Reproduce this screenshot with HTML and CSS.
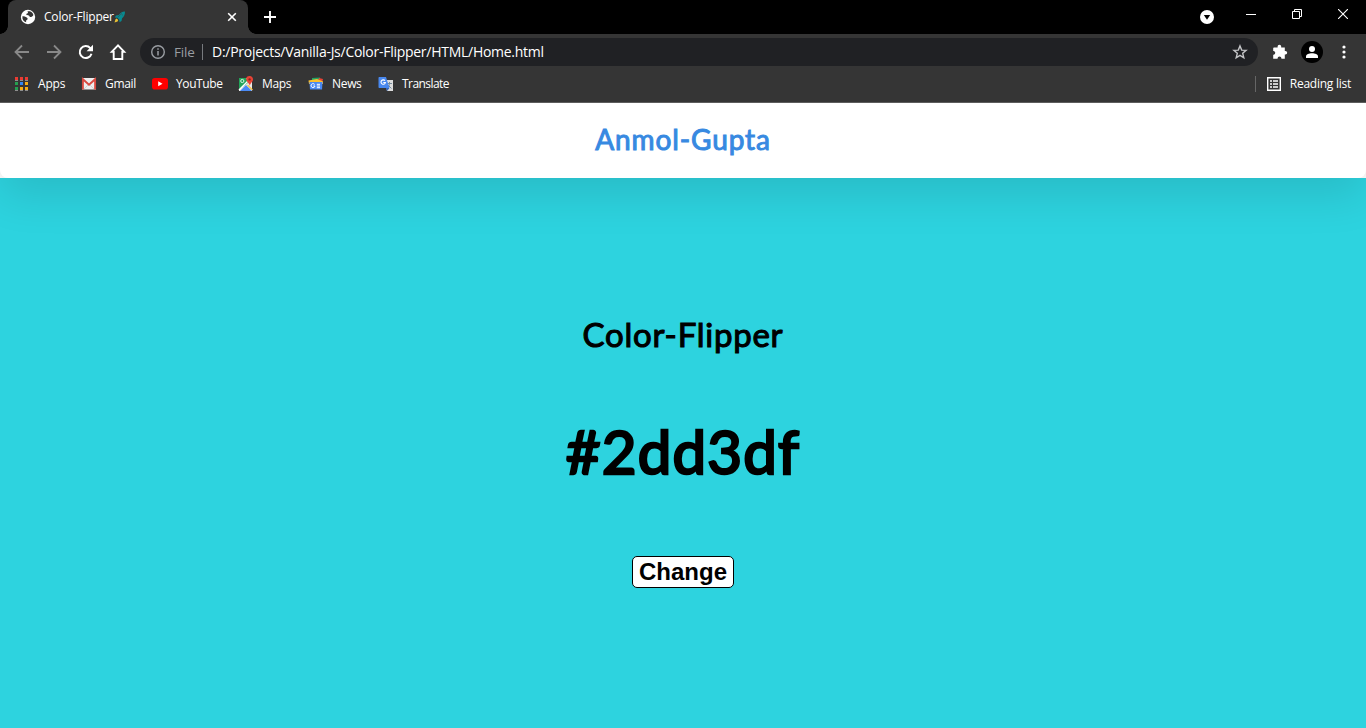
FILE: index.html
```html
<!DOCTYPE html>
<html lang="en">
<head>
<meta charset="utf-8">
<title>Color-Flipper</title>
<link rel="stylesheet" href="styles.css">
</head>
<body>
<div class="browser">
  <div class="tabstrip">
    <div class="tab">
      <svg class="globe" width="16" height="16" viewBox="0 0 16 16"><circle cx="8" cy="8" r="7.2" fill="#fff"/><path d="M2.400 7.200C4 7 5 7.400 6.300 8.200c1.100.7 1.700 1.200 1.200 2.100-.4.700-1.300.7-1.400 1.700v1.300C3.700 12.600 2 10.300 2.400 7.200zM7.500 2.300h2.300c1.700.6 3 1.800 3.600 3.600-.9 1.600-2 2.200-3.100 2.100-1-.1-.6-1.300-1.600-1.600-1-.3-2.400.1-2.400-1.100 0-.9 1.600-.6 1.700-1.600z" fill="#353535"/></svg>
      <span class="tab-title">Color-Flipper</span>
      <svg class="rocket" width="12" height="12" viewBox="0 0 12 12"><path d="M11 .5C8 .7 6.200 2 4.800 4L2 4.500.8 6.500l2.500.2 2 2 .2 2.600 2-1.300.6-2.700C10 5.700 11 3.700 11 .5z" fill="#078b91"/><path d="M7.500 3l1.600 1.500M3.800 6.200l4-3.900" stroke="#35565a" stroke-width=".8"/><path d="M.5 11.500l1-3.300 1.200-.6 1.500 1.500-.6 1.400z" fill="#e7bf35"/></svg>
      <svg class="tab-close" width="10" height="10" viewBox="0 0 10 10"><path d="M1.200 1.200l7.600 7.600M8.800 1.200L1.200 8.800" stroke="#fff" stroke-width="1.600"/></svg>
    </div>
    <svg class="newtab" width="12" height="12" viewBox="0 0 12 12"><path d="M6 0v12M0 6h12" stroke="#fff" stroke-width="1.900"/></svg>
    <div class="window-controls">
      <svg width="14" height="14" viewBox="0 0 14 14"><circle cx="7" cy="7" r="7" fill="#fff"/><path d="M3.800 5h6.400L7 9.800z" fill="#000"/></svg>
      <svg class="minimize" width="10" height="10" viewBox="0 0 10 10"><path d="M0 5.500h10" stroke="#fff"/></svg>
      <svg class="restore" width="10" height="10" viewBox="0 0 10 10"><path d="M.5 2.500h7v7h-7zM2.500 2.500v-2h7v7h-2" fill="none" stroke="#fff"/></svg>
      <svg class="win-close" width="10" height="10" viewBox="0 0 10 10"><path d="M0 0l10 10M10 0L0 10" stroke="#fff" stroke-width="1.100"/></svg>
    </div>
  </div>
  <div class="toolbar">
    <svg width="16" height="16" viewBox="0 0 16 16"><path d="M15 8H2M8 1.500L1.500 8 8 14.500" fill="none" stroke="#898989" stroke-width="1.800"/></svg>
    <svg width="16" height="16" viewBox="0 0 16 16"><path d="M1 8h13M8 1.500L14.500 8 8 14.500" fill="none" stroke="#898989" stroke-width="1.800"/></svg>
    <svg width="16" height="16" viewBox="0 0 16 16"><path d="M13.500 9.700A6 6 0 1 1 12.300 4.100L13 5" fill="none" stroke="#fff" stroke-width="2"/><path d="M15 .8v6.400H8.600z" fill="#fff"/></svg>
    <svg width="18" height="18" viewBox="0 0 18 18"><path d="M9 2.400L2.800 8.900H4.700V16h8.600V8.900h1.900z" fill="none" stroke="#fff" stroke-width="1.900"/></svg>
    <div class="omnibox">
      <svg width="16" height="16" viewBox="0 0 16 16"><circle cx="8" cy="8" r="6.300" fill="none" stroke="#999da2" stroke-width="1.400"/><path d="M8 7v4.500M8 4.300v1.500" stroke="#999da2" stroke-width="1.500"/></svg>
      <span class="scheme">File</span>
      <span class="url">D:/Projects/Vanilla-Js/Color-Flipper/HTML/Home.html</span>
      <svg class="star" width="16" height="16" viewBox="0 0 16 16"><path d="M8 1.900l1.700 4.200 4.400.3-3.400 2.900 1.100 4.500L8 11.400l-3.800 2.400 1.100-4.500-3.400-2.900 4.400-.3z" fill="none" stroke="#c4c5c7" stroke-width="1.400"/></svg>
    </div>
    <svg class="puzzle" width="16" height="16" viewBox="0 0 16 16"><path d="M2 3.400h3.600V2.600a1.800 1.800 0 0 1 3.600 0v.8h3.600V7h.6a1.800 1.800 0 0 1 0 3.600h-.6v4.200H9.400v-.5a1.900 1.900 0 0 0-3.800 0v.5H1.200v-4.100h.6a1.900 1.900 0 0 0 0-3.700h-.6V4.200c0-.5.3-.8.8-.8z" fill="#fff"/></svg>
    <svg class="avatar" width="22" height="22" viewBox="0 0 22 22"><circle cx="11" cy="11" r="11" fill="#000"/><circle cx="11" cy="8" r="3" fill="#fff"/><path d="M5 17v-1.500C5 13.400 8 12.300 11 12.300s6 1.100 6 3.200V17z" fill="#fff"/></svg>
    <svg class="kebab" width="4" height="16" viewBox="0 0 4 16"><circle cx="2" cy="3" r="1.600" fill="#fff"/><circle cx="2" cy="8" r="1.600" fill="#fff"/><circle cx="2" cy="13" r="1.600" fill="#fff"/></svg>
  </div>
  <div class="bookmarks">
    <a class="bookmark apps"><svg width="14" height="14" viewBox="0 0 14 14"><path d="M0 0h3v3H0zM5 0h3v3H5zM10 0h3v3h-3z" fill="#ea3c33"/><path d="M0 5h3v3H0zM0 10h3v3H0z" fill="#259f50"/><path d="M5 5h3v3H5z" fill="#2f87f4"/><path d="M10 5h3v3h-3zM5 10h3v3H5zM10 10h3v3h-3z" fill="#f5ad13"/><path d="M0 3.500h3M5 3.500h3M10 3.500h3M0 13.500h3M5 13.500h3M10 13.500h3" stroke="#8e8e8e"/></svg><span>Apps</span></a>
    <a class="bookmark gmail"><svg width="16" height="14" viewBox="0 0 16 14"><path d="M1 1h14v11.500H1z" fill="#eee"/><path d="M3 12l5-5 5 5" fill="none" stroke="#d2d2d2"/><path d="M1.900 12.500V2.200L8 7.700l6.100-5.500v10.300" fill="none" stroke="#d94a40" stroke-width="1.900"/></svg><span>Gmail</span></a>
    <a class="bookmark youtube"><svg width="16" height="12" viewBox="0 0 16 12"><rect width="16" height="11.500" rx="2.800" fill="#f00"/><path d="M6.200 3.300v5L10.500 5.800z" fill="#fff"/></svg><span>YouTube</span></a>
    <a class="bookmark maps"><svg width="16" height="16" viewBox="0 0 16 16"><path d="M1 2h13v13H1z" fill="#e9e9e9"/><path d="M1 2h7l3 4-10 8z" fill="#23a45a"/><path d="M2 15l6-6 6 6z" fill="#4a8af4"/><path d="M1 14L11 4" stroke="#fff" stroke-width="1.500"/><path d="M9.500 9l5 5" stroke="#f6c546" stroke-width="1.300"/><circle cx="4.300" cy="5" r="1.600" fill="none" stroke="#d9f2e2"/><path d="M11.500 0A3.300 3.300 0 0 1 15 3.500c0 2.300-2.400 3-3.200 6.300C11 6.500 8.200 5.700 8.200 3.300A3.300 3.300 0 0 1 11.500 0z" fill="#e84335"/><circle cx="11.600" cy="3.400" r="1.200" fill="#8e251e"/></svg><span>Maps</span></a>
    <a class="bookmark news"><svg width="16" height="14" viewBox="0 0 16 14"><path d="M4 1l8-.5V6H4z" fill="#21a464"/><path d="M11 1l4 1-1 4H9z" fill="#ea4335"/><path d="M.5 3.500L9 2l6 2.500V7H1z" fill="#fbc02d"/><path d="M1.500 5h13l-.5 7.500H2z" fill="#4988f2"/><path d="M6.700 7.500A2 2 0 1 0 7 9H5.300M8.800 7.300H12M8.800 9H12M8.800 10.700H12" fill="none" stroke="#fff"/></svg><span>News</span></a>
    <a class="bookmark translate"><svg width="16" height="16" viewBox="0 0 16 16"><path d="M7 4h8v11H9z" fill="#ddd"/><path d="M9 7.500h5M11.500 6v1.500c0 2-1 3-2 4M10 9l3.500 3.500" fill="none" stroke="#758b9b"/><path d="M1.500 1H8l3.500 11H1.500C.9 12 .5 11.600.5 11V2c0-.6.4-1 1-1z" fill="#4988ee"/><path d="M7 4.700A2.200 2.200 0 1 0 7.400 6.500H5.300" fill="none" stroke="#fff" stroke-width="1.100"/><path d="M8 12h3.500L9 15z" fill="#3064bd"/></svg><span>Translate</span></a>
    <div class="reading"><svg width="14" height="14" viewBox="0 0 14 14"><path d="M.7.7h12.600v12.600H.7z" fill="none" stroke="#fff" stroke-width="1.400"/><path d="M3 4h2M6 4h5M3 7h2M6 7h5M3 10h2M6 10h5" stroke="#fff" stroke-width="1.500"/></svg><span>Reading list</span></div>
  </div>
</div>
<header class="site-header"><h1 class="brand">Anmol-Gupta</h1></header>
<main class="flipper">
  <h2 class="title">Color-Flipper</h2>
  <p class="code">#2dd3df</p>
  <button class="change">Change</button>
</main>
</body>
</html>
```
FILE: styles.css
```css
* { box-sizing: border-box; }
body { margin: 0; height: 728px; display: flex; flex-direction: column; overflow: hidden; background: #fff; }
svg { display: block; flex: none; }
.browser { flex: none; height: 103px; background: #353535; border-bottom: 1px solid #5d5d5d; color: #fff; font: 12px/16px "Open Sans", "Noto Sans", sans-serif; position: relative; z-index: 3; }
.browser span { white-space: nowrap; flex: none; }
.tabstrip { height: 34px; background: #000; display: flex; align-items: center; padding-left: 8px; }
.tab { height: 34px; width: 240px; background: #353535; border-radius: 8px 8px 0 0; display: flex; align-items: center; padding: 0 11px 0 12px; position: relative; }
.tab::before, .tab::after { content: ""; position: absolute; bottom: 0; width: 8px; height: 8px; }
.tab::before { left: -8px; background: radial-gradient(circle at 0 0, #000 7.5px, #353535 8px); }
.tab::after { right: -8px; background: radial-gradient(circle at 100% 0, #000 7.5px, #353535 8px); }
.tab-title { margin-left: 8px; width: 70px; letter-spacing: -.2px; }
.tab-close { margin-left: auto; }
.newtab { margin-left: 16px; }
.window-controls { margin-left: auto; display: flex; align-items: center; padding: 0 18px 0 0; }
.minimize { margin: -6px 0 0 32px; }
.restore { margin: -6px 0 0 36px; }
.win-close { margin: -6px 0 0 36px; }
.toolbar { height: 36px; display: flex; align-items: center; padding: 0 20px 0 14px; gap: 16px; }
.toolbar > svg:nth-child(4) { margin-left: -1px; }
.omnibox { width: 1118px; height: 28px; border-radius: 14px; background: #202124; display: flex; align-items: center; padding: 0 10px; margin-left: -3px; flex: none; }
.scheme { color: #999da2; margin-left: 8px; width: 29px; border-right: 1px solid #777a7e; letter-spacing: -.15px; font-size: 13.5px; }
.url { margin-left: 9px; letter-spacing: -.27px; font-size: 14px; }
.star { margin-left: auto; }
.puzzle { margin-left: -2px; }
.avatar { margin-left: -3px; }
.kebab { margin-left: 3px; }
.bookmarks { height: 32px; display: flex; align-items: center; padding: 0 15px 4px 15px; }
.bookmark { display: flex; align-items: center; gap: 8px; letter-spacing: -.32px; }
.apps { width: 66px; gap: 9px; letter-spacing: -.2px; }
.gmail { width: 71px; }
.youtube { width: 86px; letter-spacing: -.4px; }
.maps { width: 70px; }
.news { width: 70px; }
.translate { letter-spacing: -.55px; }
.reading { margin-left: auto; display: flex; align-items: center; gap: 9px; padding-left: 11px; border-left: 1px solid #666; letter-spacing: -.25px; }
.site-header { flex: none; height: 75px; background: #fff; border-radius: 0 0 8px 8px; box-shadow: 0 18px 44px rgba(0, 0, 0, .11); display: flex; justify-content: center; position: relative; z-index: 2; }
.brand, .title, .code { margin: 0; font-family: Lato, sans-serif; font-weight: 400; white-space: nowrap; }
.brand { color: #3789e1; font-size: 28px; line-height: 36px; padding-top: 18px; letter-spacing: .9px; -webkit-text-stroke: 1px currentColor; }
.flipper { flex: 1; background: #2dd3df; display: flex; flex-direction: column; align-items: center; padding-top: 132px; color: #000; }
.title { font-size: 33px; line-height: 48px; letter-spacing: .75px; -webkit-text-stroke: 1.1px currentColor; }
.code { font-size: 60px; line-height: 72px; margin-top: 57px; letter-spacing: 1.2px; -webkit-text-stroke: 2.6px currentColor; }
.change { margin-top: 69px; width: 102px; height: 32px; padding: 0; border: 1px solid #000; border-radius: 5px; background: #fff; color: #000; font: 700 24px/30px "Liberation Sans", Arial, sans-serif; }
```
